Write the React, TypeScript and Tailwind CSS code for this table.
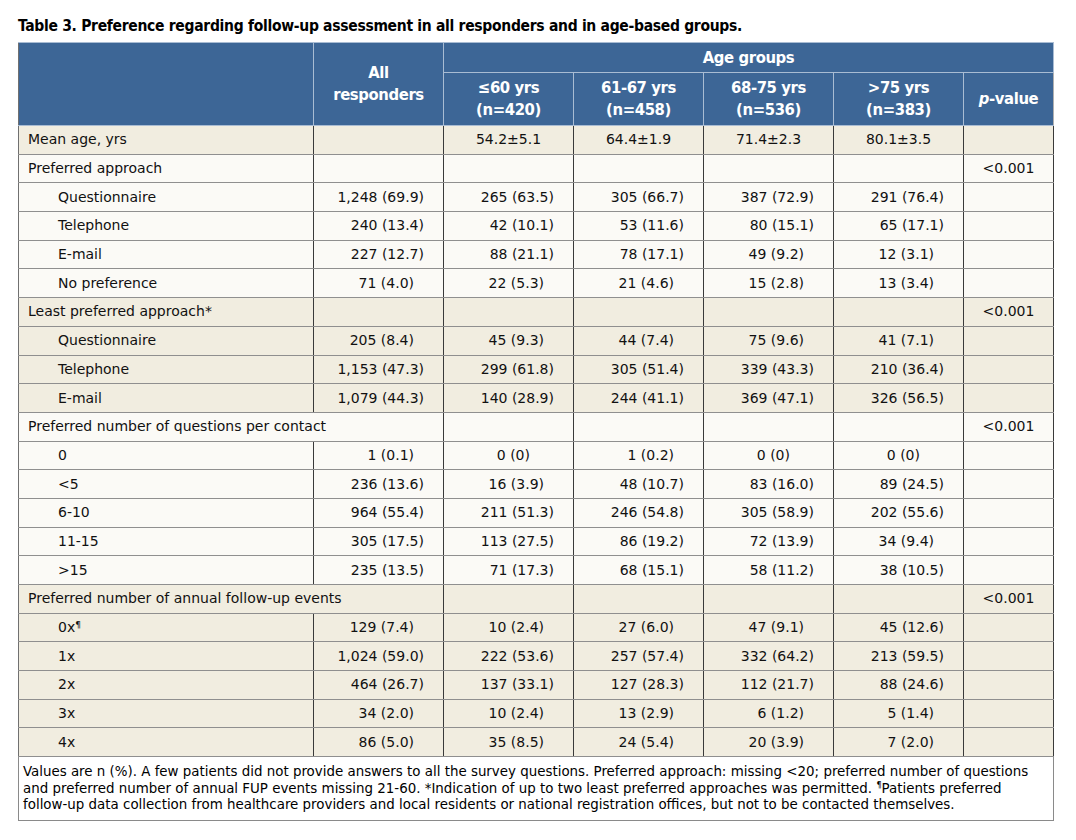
const cond = "font-['Liberation_Sans_Narrow','DejaVu_Sans_Condensed','Arial_Narrow',sans-serif]";

type Row =
  | { kind: "mean"; label: string; vals: string[] }
  | { kind: "group"; label: string; span?: boolean }
  | { kind: "item"; label: string; vals: string[] };

type Block = { bg: string; rows: Row[] };

const blocks: Block[] = [
  {
    bg: "bg-[#f1ede0]",
    rows: [{ kind: "mean", label: "Mean age, yrs", vals: ["", "54.2±5.1", "64.4±1.9", "71.4±2.3", "80.1±3.5"] }],
  },
  {
    bg: "bg-[#fbfaf6]",
    rows: [
      { kind: "group", label: "Preferred approach" },
      { kind: "item", label: "Questionnaire", vals: ["1,248 (69.9)", "265 (63.5)", "305 (66.7)", "387 (72.9)", "291 (76.4)"] },
      { kind: "item", label: "Telephone", vals: ["240 (13.4)", "42 (10.1)", "53 (11.6)", "80 (15.1)", "65 (17.1)"] },
      { kind: "item", label: "E-mail", vals: ["227 (12.7)", "88 (21.1)", "78 (17.1)", "49 (9.2)", "12 (3.1)"] },
      { kind: "item", label: "No preference", vals: ["71 (4.0)", "22 (5.3)", "21 (4.6)", "15 (2.8)", "13 (3.4)"] },
    ],
  },
  {
    bg: "bg-[#f1ede0]",
    rows: [
      { kind: "group", label: "Least preferred approach*" },
      { kind: "item", label: "Questionnaire", vals: ["205 (8.4)", "45 (9.3)", "44 (7.4)", "75 (9.6)", "41 (7.1)"] },
      { kind: "item", label: "Telephone", vals: ["1,153 (47.3)", "299 (61.8)", "305 (51.4)", "339 (43.3)", "210 (36.4)"] },
      { kind: "item", label: "E-mail", vals: ["1,079 (44.3)", "140 (28.9)", "244 (41.1)", "369 (47.1)", "326 (56.5)"] },
    ],
  },
  {
    bg: "bg-[#fbfaf6]",
    rows: [
      { kind: "group", label: "Preferred number of questions per contact", span: true },
      { kind: "item", label: "0", vals: ["1 (0.1)", "0 (0)", "1 (0.2)", "0 (0)", "0 (0)"] },
      { kind: "item", label: "<5", vals: ["236 (13.6)", "16 (3.9)", "48 (10.7)", "83 (16.0)", "89 (24.5)"] },
      { kind: "item", label: "6-10", vals: ["964 (55.4)", "211 (51.3)", "246 (54.8)", "305 (58.9)", "202 (55.6)"] },
      { kind: "item", label: "11-15", vals: ["305 (17.5)", "113 (27.5)", "86 (19.2)", "72 (13.9)", "34 (9.4)"] },
      { kind: "item", label: ">15", vals: ["235 (13.5)", "71 (17.3)", "68 (15.1)", "58 (11.2)", "38 (10.5)"] },
    ],
  },
  {
    bg: "bg-[#f1ede0]",
    rows: [
      { kind: "group", label: "Preferred number of annual follow-up events", span: true },
      { kind: "item", label: "0x¶", vals: ["129 (7.4)", "10 (2.4)", "27 (6.0)", "47 (9.1)", "45 (12.6)"] },
      { kind: "item", label: "1x", vals: ["1,024 (59.0)", "222 (53.6)", "257 (57.4)", "332 (64.2)", "213 (59.5)"] },
      { kind: "item", label: "2x", vals: ["464 (26.7)", "137 (33.1)", "127 (28.3)", "112 (21.7)", "88 (24.6)"] },
      { kind: "item", label: "3x", vals: ["34 (2.0)", "10 (2.4)", "13 (2.9)", "6 (1.2)", "5 (1.4)"] },
      { kind: "item", label: "4x", vals: ["86 (5.0)", "35 (8.5)", "24 (5.4)", "20 (3.9)", "7 (2.0)"] },
    ],
  },
];

// right padding so the ")" lines up like the printed table
function padFor(v: string) {
  if (v === "0 (0)") return "pr-[43px]";
  const m = v.match(/\((\d+)\./);
  return m && m[1].length === 1 ? "pr-[29px]" : "pr-[19px]";
}

const td = "border-r border-b border-r-[#3a3a3a] border-b-[#8f8f8f] h-[28.7px] p-0 align-middle";

function Label({ text }: { text: string }) {
  if (text.endsWith("¶")) {
    return (
      <>
        {text.slice(0, -1)}
        <sup className="text-[9px]">¶</sup>
      </>
    );
  }
  return <>{text}</>;
}

function BodyRow({ row, bg }: { row: Row; bg: string }) {
  if (row.kind === "group") {
    return (
      <tr className={bg}>
        <td className={`${td} pl-[9px] whitespace-nowrap`} colSpan={row.span ? 2 : 1}>
          {row.label}
        </td>
        {!row.span && <td className={td} />}
        <td className={td} />
        <td className={td} />
        <td className={td} />
        <td className={td} />
        <td className={`${td} text-center`}>&lt;0.001</td>
      </tr>
    );
  }
  if (row.kind === "mean") {
    return (
      <tr className={bg}>
        <td className={`${td} pl-[9px]`}>{row.label}</td>
        {row.vals.map((v, i) => (
          <td key={i} className={`${td} text-center`}>
            {v}
          </td>
        ))}
        <td className={td} />
      </tr>
    );
  }
  return (
    <tr className={bg}>
      <td className={`${td} pl-[39px]`}>
        <Label text={row.label} />
      </td>
      {row.vals.map((v, i) => (
        <td key={i} className={`${td} text-right ${padFor(v)}`}>
          {v}
        </td>
      ))}
      <td className={td} />
    </tr>
  );
}

export default function App() {
  const th =
    "border border-[#a9bcd3] bg-[#3d6696] text-white font-bold text-[16.5px] leading-[22px] tracking-[-0.4px] p-0 align-middle";
  return (
    <div className="w-[1076px] h-[840px] bg-white pt-[16px] pl-[18px]">
      <h1 className={`${cond} font-bold text-[15.5px] leading-[20px] tracking-[-0.3px] text-black`}>
        Table 3. Preference regarding follow-up assessment in all responders and in age-based groups.
      </h1>
      <table className="mt-[6px] border-collapse table-fixed w-[1035px] font-['DejaVu_Sans',sans-serif] text-[14px] text-[#111] border-l border-l-[#707070]">
        <colgroup>
          <col className="w-[295px]" />
          <col className="w-[130px]" />
          <col className="w-[130px]" />
          <col className="w-[130px]" />
          <col className="w-[130px]" />
          <col className="w-[130px]" />
          <col className="w-[90px]" />
        </colgroup>
        <thead className={cond}>
          <tr className="h-[30px]">
            <th className={`${th} border-l-[#707070]`} rowSpan={2} />
            <th className={th} rowSpan={2}>
              All
              <br />
              responders
            </th>
            <th className={th} colSpan={5}>
              Age groups
            </th>
          </tr>
          <tr className="h-[53px]">
            {[
              ["≤60 yrs", "(n=420)"],
              ["61-67 yrs", "(n=458)"],
              ["68-75 yrs", "(n=536)"],
              [">75 yrs", "(n=383)"],
            ].map(([a, b]) => (
              <th key={a} className={th}>
                {a}
                <br />
                {b}
              </th>
            ))}
            <th className={`${th} border-r-[#b0b0b0]`}>
              <i>p</i>-value
            </th>
          </tr>
        </thead>
        <tbody>
          {blocks.map((b, bi) =>
            b.rows.map((r, ri) => <BodyRow key={`${bi}-${ri}`} row={r} bg={b.bg} />)
          )}
          <tr>
            <td
              colSpan={7}
              className={`border border-[#8a8a8a] bg-white px-[4px] pt-[6px] pb-[7px] ${cond} text-[14.9px] leading-[16.5px] text-black whitespace-nowrap`}
            >
              Values are n (%). A few patients did not provide answers to all the survey questions. Preferred approach: missing &lt;20; preferred number of questions
              <br />
              and preferred number of annual FUP events missing 21-60. *Indication of up to two least preferred approaches was permitted.{" "}
              <sup className="text-[9px]">¶</sup>Patients preferred
              <br />
              follow-up data collection from healthcare providers and local residents or national registration offices, but not to be contacted themselves.
            </td>
          </tr>
        </tbody>
      </table>
    </div>
  );
}
